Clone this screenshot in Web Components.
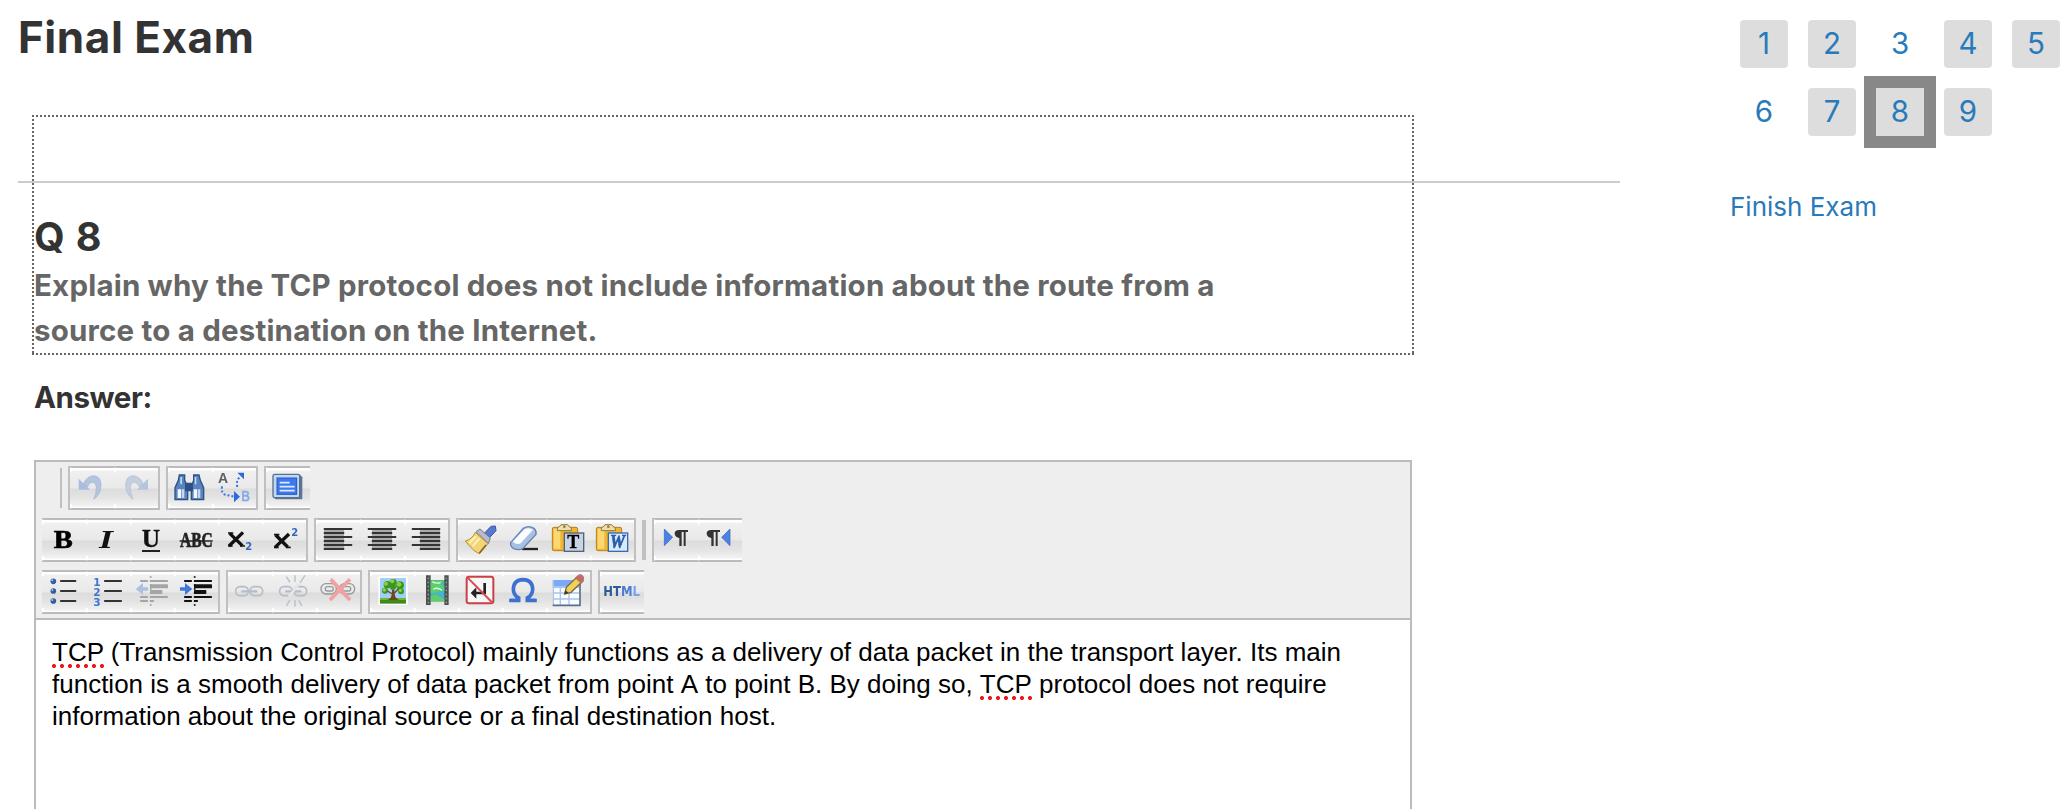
<!DOCTYPE html>
<html lang="en">
<head>
<meta charset="utf-8">
<title>Final Exam</title>
<style>
html,body{margin:0;padding:0;background:#fff;overflow:hidden}
body{font-family:Inter,"Open Sans",sans-serif;color:#333}
</style>
</head>
<body>
<exam-page>
  <exam-header slot="main">Final Exam</exam-header>
  <exam-question slot="main" number="Q 8">
    <div>Explain why the TCP protocol does not include information about the route from a</div>
    <div>source to a destination on the Internet.</div>
  </exam-question>
  <answer-label slot="main">Answer:</answer-label>
  <rich-editor slot="main">
    <div><spell-mark>TCP</spell-mark> (Transmission Control Protocol) mainly functions as a delivery of data packet in the transport layer. Its main</div>
    <div style="font-kerning:none">function is a smooth delivery of data packet from point A to point B. By doing so, <spell-mark>TCP</spell-mark> protocol does not require</div>
    <div>information about the original source or a final destination host.</div>
  </rich-editor>
  <question-nav slot="side">
    <nav-tile filled>1</nav-tile><nav-tile filled>2</nav-tile><nav-tile>3</nav-tile><nav-tile filled>4</nav-tile><nav-tile filled>5</nav-tile>
    <nav-tile>6</nav-tile><nav-tile filled>7</nav-tile><nav-tile filled current>8</nav-tile><nav-tile filled>9</nav-tile>
  </question-nav>
  <finish-link slot="side">Finish Exam</finish-link>
</exam-page>
<script>
const define = (name, html, setup) => customElements.define(name, class extends HTMLElement {
  constructor(){ super(); this.attachShadow({mode:'open'}); }
  connectedCallback(){
    if (this.shadowRoot.childNodes.length) return;
    this.shadowRoot.innerHTML = html;
    if (setup) setup(this, this.shadowRoot);
  }
});

/* Toolbar icons: [viewBox origin x, origin y, markup]; every cell is 132 units square. */
const bars = (rows, c) => rows.map(([x,y,w,h=6]) => `<rect x="${x}" y="${y}" width="${w}" height="${h}" rx="2" fill="${c}"/>`).join('');
const clip = dx => `<g transform="translate(${dx} 0)"><rect x="97" y="82" width="76" height="70" rx="5" fill="#f2b52c" stroke="#b8801c" stroke-width="3"/><path d="M101 86h20v60h-20z" fill="#fbd873"/><path d="M112 92v-9q8-2 11-9h20q3 7 11 9v9z" fill="#e9dfae" stroke="#8f7a3c" stroke-width="3"/><circle cx="133" cy="80" r="4" fill="#9b7f30"/>`;
const chain = (c, dy=0) => `<g fill="none" stroke="${c}" stroke-width="5"><rect x="617" y="${395+dy}" width="38" height="27" rx="13"/><rect x="660" y="${395+dy}" width="38" height="27" rx="13"/></g><path d="M637 ${409+dy}h42" stroke="${c}" stroke-width="7" stroke-linecap="round"/>`;
const ICONS = {
  undo:[120,33,`<path d="M146 71v33h34z" fill="#a9bde0"/><path d="M160 88q10-26 33-26 21 3 20 32-2 25-22 39 9-21 8-36-2-16-13-15-9 1-13 13z" fill="#b4c3de" stroke="#9fb3d6" stroke-width="2"/>`],
  redo:[252,33,`<path d="M354 71v33h-34z" fill="#b5c5df"/><path d="M340 88q-10-26-33-26-21 3-20 32 2 25 22 39-9-21-8-36 2-16 13-15 9 1 13 13z" fill="#c3cedf" stroke="#acbdd8" stroke-width="2"/>`],
  find:[414,33,`<g stroke="#2e5288" stroke-width="4"><path d="M448 60h16v16l9 20v38h-38V98l10-22zM491 60h16l4 16 10 22v36h-37V96l7-20z" fill="#5a83bd"/><path d="M467 85h20v22h-20z" fill="#2c4f86"/></g><path d="M443 103h10v26h-10zM491 103h10v26h-10z" fill="#f3f8ff"/><path d="M455 103h8v26h-8zM503 103h8v26h-8zM451 66h5v22h-5zM494 66h5v22h-5z" fill="#c5d8f0"/>`],
  replace:[546,33,`<text x="564" y="84" font-family="Liberation Sans" font-weight="700" font-size="42" fill="#5a6069">A</text><text x="634" y="138" font-family="Liberation Sans" font-size="44" fill="#84a9ee" stroke="#84a9ee" stroke-width="2" textLength="26" lengthAdjust="spacingAndGlyphs">B</text><path d="M576 94q-3 22 10 25t27 6M622 96q-5-20 9-31" fill="none" stroke="#3c73dd" stroke-width="6" stroke-dasharray="6 6"/><path d="M612 108l18 17-18 17zM622 53h20v20z" fill="#2f68dd"/>`],
  full:[708,33,`<path d="M731 59h79l7 8v66h-80l-8-8z" fill="#5b7796"/><rect x="729" y="58" width="80" height="70" rx="5" fill="#c3d7ee" stroke="#557090" stroke-width="4"/><rect x="741" y="69" width="59" height="49" fill="#3c78ee" stroke="#2458bd" stroke-width="3"/><path d="M749 83h30M749 95h45M749 107h45" stroke="#dceaff" stroke-width="5"/>`],
  bold:[36,189,`<text x="71" y="278" textLength="57" lengthAdjust="spacingAndGlyphs" font-family="Liberation Serif" font-weight="700" font-size="78" fill="#000" stroke="#000" stroke-width="2">B</text>`],
  italic:[168,189,`<text x="207" y="278" textLength="42" lengthAdjust="spacingAndGlyphs" font-family="Liberation Serif" font-style="italic" font-weight="700" font-size="78" fill="#111">I</text>`],
  under:[300,189,`<text x="335" y="275" textLength="55" lengthAdjust="spacingAndGlyphs" font-family="Liberation Serif" font-weight="700" font-size="74" fill="#111" stroke="#111">U</text><path d="M336 288h54" stroke="#222" stroke-width="6"/>`],
  strike:[432,189,`<text x="450" y="275" textLength="98" lengthAdjust="spacingAndGlyphs" font-family="Liberation Serif" font-weight="700" font-size="64" fill="#222" stroke="#222" stroke-width="2">ABC</text><path d="M449 258h99" stroke="#222" stroke-width="5"/>`],
  sub:[564,189,`<path d="M599 235l38 37M639 232l-42 41" stroke="#111" stroke-width="10"/><path d="M594 234h16M594 273h14M630 273h15" stroke="#111" stroke-width="5"/><text x="646" y="284" font-family="DejaVu Sans" font-weight="700" font-size="30" fill="#3566bd">2</text>`],
  sup:[696,189,`<path d="M737 240l36 36M777 237l-42 40" stroke="#111" stroke-width="10"/><path d="M732 239h16M732 277h14M768 277h14" stroke="#111" stroke-width="5"/><text x="784" y="244" font-family="DejaVu Sans" font-weight="700" font-size="30" fill="#3566bd">2</text>`],
  left:[48,189,`<path fill="#aaa" d="M72 225h60v58H72z"/>`+bars([[71,219,86],[71,231,62],[71,243,86],[71,255,62],[71,267,86],[71,279,62]],'#333')],
  center:[180,189,`<path fill="#aaa" d="M216 225h60v58h-60z"/>`+bars([[203,219,86],[215,231,62],[203,243,86],[215,255,62],[203,267,86],[215,279,62]],'#333')],
  right:[312,189,`<path fill="#aaa" d="M360 225h60v58h-60z"/>`+bars([[335,219,86],[359,231,62],[335,243,86],[359,255,62],[335,267,86],[359,279,62]],'#333')],
  brush:[474,189,`<path d="M573 214l13-1 2 14-24 26-16-13z" fill="#5878d0" stroke="#3d55a5" stroke-width="3"/><path d="M528 230l12-8 31 27-6 17z" fill="#b8bcc8" stroke="#72798c" stroke-width="3"/><path d="M526 232l38 34-26 30q-16-5-42-38 20-5 30-26z" fill="#f3d479" stroke="#b58c33" stroke-width="3"/><path d="M538 250l-20 24M528 244l-20 20" stroke="#fff3bc" stroke-width="6"/><path d="M538 295l20-25" stroke="#8d6515" stroke-width="5"/>`],
  eraser:[606,189,`<path d="M666 282h48" stroke="#222" stroke-width="7"/><path d="M632 263l38-43q16-10 32 0 8 8 6 18l-40 43q-12 6-28-1-10-7-8-17z" fill="#a9c0e2" stroke="#6685b5" stroke-width="4"/><path d="M638 260l36-38q13-6 25 2l-37 41q-12 5-24-5z" fill="#fbfdff"/>`],
  ptext:[78,54,clip(0)+`<rect x="133" y="99" width="58" height="55" fill="#c9d4e4" stroke="#53627a" stroke-width="4"/><text x="142" y="145" font-family="Liberation Serif" font-weight="700" font-size="54" fill="#000" stroke="#000">T</text></g>`],
  pword:[210,54,clip(132)+`<rect x="133" y="99" width="58" height="55" fill="#dceaff" stroke="#3a6ab5" stroke-width="4"/><text x="138" y="145" textLength="45" lengthAdjust="spacingAndGlyphs" font-family="Liberation Serif" font-style="italic" font-weight="700" font-size="54" fill="#285da8" stroke="#285da8" stroke-width="2">W</text></g>`],
  ltr:[402,54,`<path d="M433 87l25 25-25 25z" fill="#4c82e4" stroke="#3263bb" stroke-width="2"/><path d="M504 90h-29q-12 2-11 12 2 11 14 12v24h7V96h6v42h6V96h7z" fill="#333"/>`],
  rtl:[534,54,`<path d="M630 87l-25 25 25 25z" fill="#4c82e4" stroke="#3263bb" stroke-width="2"/><path d="M600 90h-29q-12 2-11 12 2 11 14 12v24h7V96h6v42h6V96h7z" fill="#333"/>`],
  ul:[36,345,bars([[90,375,49],[90,405,49],[90,435,49]],'#333')+`<g fill="#315f9e"><circle cx="70" cy="379" r="8.5"/><circle cx="70" cy="408" r="8.5"/><circle cx="70" cy="438" r="8.5"/></g><g fill="#a6c8f2"><circle cx="67" cy="376" r="3"/><circle cx="67" cy="405" r="3"/><circle cx="67" cy="435" r="3"/></g>`],
  ol:[168,345,bars([[222,375,54],[222,405,54],[222,435,54]],'#333')+`<g font-family="DejaVu Sans" font-weight="700" font-size="32" fill="#4076d0"><text x="190" y="393">1</text><text x="190" y="423">2</text><text x="190" y="453">3</text></g>`],
  outdent:[300,345,`<path d="M362 363v92" stroke="#aaa" stroke-width="5" stroke-dasharray="6 6"/>`+bars([[330,375,24],[360,375,54],[360,388,54,12],[360,405,37,12],[360,423,54],[330,423,24],[330,435,24],[360,435,12]],'#a5a5a5')+`<path d="M317 402l22-18v13h15v10h-15v13z" fill="#aebfe2"/>`],
  indent:[432,345,`<path d="M494 363v92" stroke="#333" stroke-width="5" stroke-dasharray="6 6"/>`+bars([[462,375,24],[492,375,54],[492,388,54,12],[492,405,37,12],[492,423,54],[462,423,24],[462,435,24],[492,435,12]],'#111')+`<path d="M487 402l-22-18v13h-15v10h15v13z" fill="#3f78dd"/>`],
  link:[594,345,chain('#b5bdc9')],
  unlink:[726,345,`<g transform="translate(132 0)">${chain('#b5bdc9')}<path d="M645 425l29-38" stroke="#e6e6e6" stroke-width="8"/></g><path d="M769 365l11 17M795 361v20M825 361l-15 23M769 453l10-17M795 455v-20M816 453l-10-17" stroke="#b7bdc6" stroke-width="4"/>`],
  nolink:[48,345,`<g fill="none" stroke="#999" stroke-width="4"><rect x="63" y="386" width="46" height="31" rx="15"/><rect x="118" y="386" width="46" height="31" rx="15"/><rect x="76" y="395" width="24" height="13" rx="6"/><rect x="128" y="395" width="24" height="13" rx="6"/></g><path d="M92 373l58 62M150 373l-60 62" stroke="#f2a0a0" stroke-width="11"/>`],
  image:[210,345,`<rect x="235" y="364" width="88" height="86" fill="#fff"/><path d="M240 369h78v62h-78z" fill="#9fd0f7"/><path d="M240 430h78v16h-78z" fill="#3f8a1c"/><path d="M240 430h78v5h-78z" fill="#73b82b"/><path d="M262 435q16-5 14-30h7q-1 26 15 30z" fill="#70451b"/><g fill="#3f941d"><circle cx="262" cy="389" r="11"/><circle cx="280" cy="382" r="10"/><circle cx="300" cy="391" r="12"/><circle cx="255" cy="407" r="9"/><circle cx="303" cy="409" r="9"/><circle cx="279" cy="396" r="9"/></g><g fill="#8cd044"><circle cx="258" cy="386" r="6"/><circle cx="277" cy="379" r="6"/><circle cx="297" cy="388" r="7"/><circle cx="253" cy="405" r="5"/><circle cx="301" cy="406" r="5"/></g><path d="M262 408l17 10 17-17" stroke="#70451b" stroke-width="4" fill="none"/>`],
  film:[342,345,`<path d="M378 361h14v14h41v-14h13v89h-13v-11h-41v11h-14z" fill="#4c5350"/><path d="M392 376h41v63h-41z" fill="#45b5d2"/><path d="M392 376h41l-12 12 12 8v12q-14-2-24 4t-17 0zM392 424q15-11 28 2l13 7v6h-41z" fill="#5fcf65"/><path d="M397 380q12 8 25 2M400 403q12-8 26 3" stroke="#d5f5f2" stroke-width="4" fill="none"/><path d="M385 368v78M439 368v78" stroke="#969c99" stroke-width="4" stroke-dasharray="5 7"/>`],
  nobr:[474,345,`<rect x="500" y="365" width="80" height="80" rx="7" fill="#f7f7f7" stroke="#c94146" stroke-width="6"/><path d="M554 384v30h-32" fill="none" stroke="#222" stroke-width="8"/><path d="M512 414l17-17v34z" fill="#222"/><path d="M502 367l76 77" stroke="#d74b50" stroke-width="6"/>`],
  omega:[606,345,`<path d="M631 436h25v-7q-16-8-16-27 1-27 29-28 28 1 29 28 0 19-16 27v7h25M633 442v-11M705 442v-11" fill="none" stroke="#3d70cf" stroke-width="11"/>`],
  table:[78,210,`<path d="M98 240h82v77H98z" fill="#f8fbff"/><path d="M98 240h78v20H98z" fill="#79a9f7"/><path d="M100 241v74M121 260v54M147 260v54M98 262h80M98 279h80M98 297h80" stroke="#a9c4e8" stroke-width="4"/><path d="M98 316h82V242" fill="none" stroke="#596f8e" stroke-width="5"/><path d="M134 282l5-20 34-33 15 15-35 33z" fill="#f2cf5b" stroke="#7c6939" stroke-width="4"/><path d="M167 234l9-9q11-4 15 8l-2 11-6 6z" fill="#cd6860" stroke="#9b7770" stroke-width="3"/><path d="M133 283l4-12 8 8z" fill="#333"/>`],
  html:[240,210,`<text x="250" y="288" textLength="110" lengthAdjust="spacingAndGlyphs" font-family="DejaVu Sans" font-weight="700" font-size="42"><tspan fill="#315b97">HT</tspan><tspan fill="#4b7bd2">M</tspan><tspan fill="#7ba1e8">L</tspan></text>`]
};

define('exam-page', `<style>
:host{display:grid;grid-template-columns:1620px 1fr;height:809px;overflow:hidden}
main{padding-left:18px}
aside{padding:20px 0 0 110px}
</style><main><slot name="main"></slot></main><aside><slot name="side"></slot></aside>`);

define('exam-header', `<style>
:host{display:block;height:181px;border-bottom:2px solid #ccc}
h1{margin:0;padding-top:7px;font-size:44px;line-height:60px;font-weight:700;letter-spacing:.55px;color:#333}
</style><h1><slot></slot></h1>`);

define('exam-question', `<style>
:host{display:block;position:relative;margin-left:16px;height:172px}
.focus{position:absolute;left:-2px;top:-68px;width:1382px;height:240px;
 background:
 repeating-linear-gradient(90deg,#666 0 2px,#fff0 2px 4px) 0 0/100% 2px no-repeat,
 repeating-linear-gradient(90deg,#666 0 2px,#fff0 2px 4px) 0 100%/100% 2px no-repeat,
 repeating-linear-gradient(180deg,#666 0 2px,#fff0 2px 4px) 0 0/2px 100% no-repeat,
 repeating-linear-gradient(180deg,#666 0 2px,#fff0 2px 4px) 100% 0/2px 100% no-repeat}
h2{margin:0;padding-top:29px;font-size:39.5px;line-height:50px;height:50px;font-weight:700;letter-spacing:.8px;color:#333}
.q{font-size:29.5px;line-height:45px;font-weight:700;color:#666;white-space:nowrap;margin-top:1px;letter-spacing:.19px}
</style><div class="focus"></div><h2></h2><div class="q"><slot></slot></div>`,
 (el, r) => { r.querySelector('h2').textContent = el.getAttribute('number'); });

define('answer-label', `<style>
:host{display:block;box-sizing:border-box;margin-left:16px;padding-top:20px;height:105px}
div{font-size:29.5px;line-height:45px;font-weight:700;color:#333;letter-spacing:-.45px;white-space:nowrap}
</style><div><slot></slot></div>`);

define('tool-button', `<style>
:host{display:block;width:44px;height:44px;background:
 radial-gradient(circle at 0 4px,#fff 2px,#fff0 3px),radial-gradient(circle at 0 40px,#fff 2px,#fff0 3px),
 linear-gradient(#bbb 0 2px,#fff 2px 4px,#f0f0f0 5px,#e9e9e9 22px,#dcdcdc 23px,#e4e4e4 32px,#f2f2f2 40px,#fff 41px 42px,#bbb 42px)}
svg{display:block;width:44px;height:44px;filter:blur(.5px)}
</style><svg></svg>`, (el, r) => {
  const [x, y, m] = ICONS[el.getAttribute('icon')], s = r.querySelector('svg');
  s.setAttribute('viewBox', `${x} ${y} 132 132`); s.innerHTML = m;
});

define('tool-group', `<style>
:host{display:flex;height:44px}
:host([l]){border-left:2px solid #c0c0c0}
:host([r]){border-right:2px solid #c0c0c0}
</style><slot></slot>`);

define('tool-sep', `<style>:host{display:block;width:2px;height:40px;margin-top:2px;background:#c0c0c0}:host([wide]){width:4px}</style>`);

const group = (flags, names) => `<tool-group ${flags}>${names.split(' ').map(n => `<tool-button icon="${n}"></tool-button>`).join('')}</tool-group>`;
define('rich-editor', `<style>
:host{display:block;box-sizing:border-box;margin-left:16px;width:1378px;height:400px;border:2px solid #bbb;background:#fff}
.bar{display:flex;flex-direction:column;gap:8px;padding:4px 0 4px 6px;background:#eee;border-bottom:2px solid #bbb}
.row{display:flex;gap:6px;height:44px}
.first{padding-left:18px}
.body{padding:16px 16px;font:26px/32px "Liberation Sans",Arial,sans-serif;color:#000;white-space:nowrap}
</style>
<div class="bar">
<div class="row first"><tool-sep></tool-sep>${group('l r','undo redo')}${group('l r','find replace')}${group('l','full')}</div>
<div class="row">${group('r','bold italic under strike sub sup')}${group('l r','left center right')}${group('l r','brush eraser ptext pword')}<tool-sep wide></tool-sep>${group('l','ltr rtl')}</div>
<div class="row">${group('r','ul ol outdent indent')}${group('l r','link unlink nolink')}${group('l r','image film nobr omega table')}${group('l','html')}</div>
</div>
<div class="body"><slot></slot></div>`);

define('spell-mark', `<style>
:host{background:radial-gradient(circle at 2px 2px,#f01818 1.7px,#fff0 2.3px) 0 100%/8px 4px repeat-x;padding-bottom:1px}
</style><slot></slot>`);

define('question-nav', `<style>
:host{display:grid;grid-template-columns:repeat(5,48px);gap:20px;margin-left:10px}
</style><slot></slot>`);

define('nav-tile', `<style>
:host{display:block;height:48px;border-radius:4px;text-align:center;font-size:29.5px;line-height:46px;color:#287ab9}
:host([filled]){background:#ddd}
:host([current]){border-radius:0;box-shadow:0 0 0 12px #888}
</style><slot></slot>`);

define('finish-link', `<style>
:host{display:block;margin-top:53px;font-size:26px;line-height:36px;color:#287ab9}
</style><slot></slot>`);
</script>
</body>
</html>
